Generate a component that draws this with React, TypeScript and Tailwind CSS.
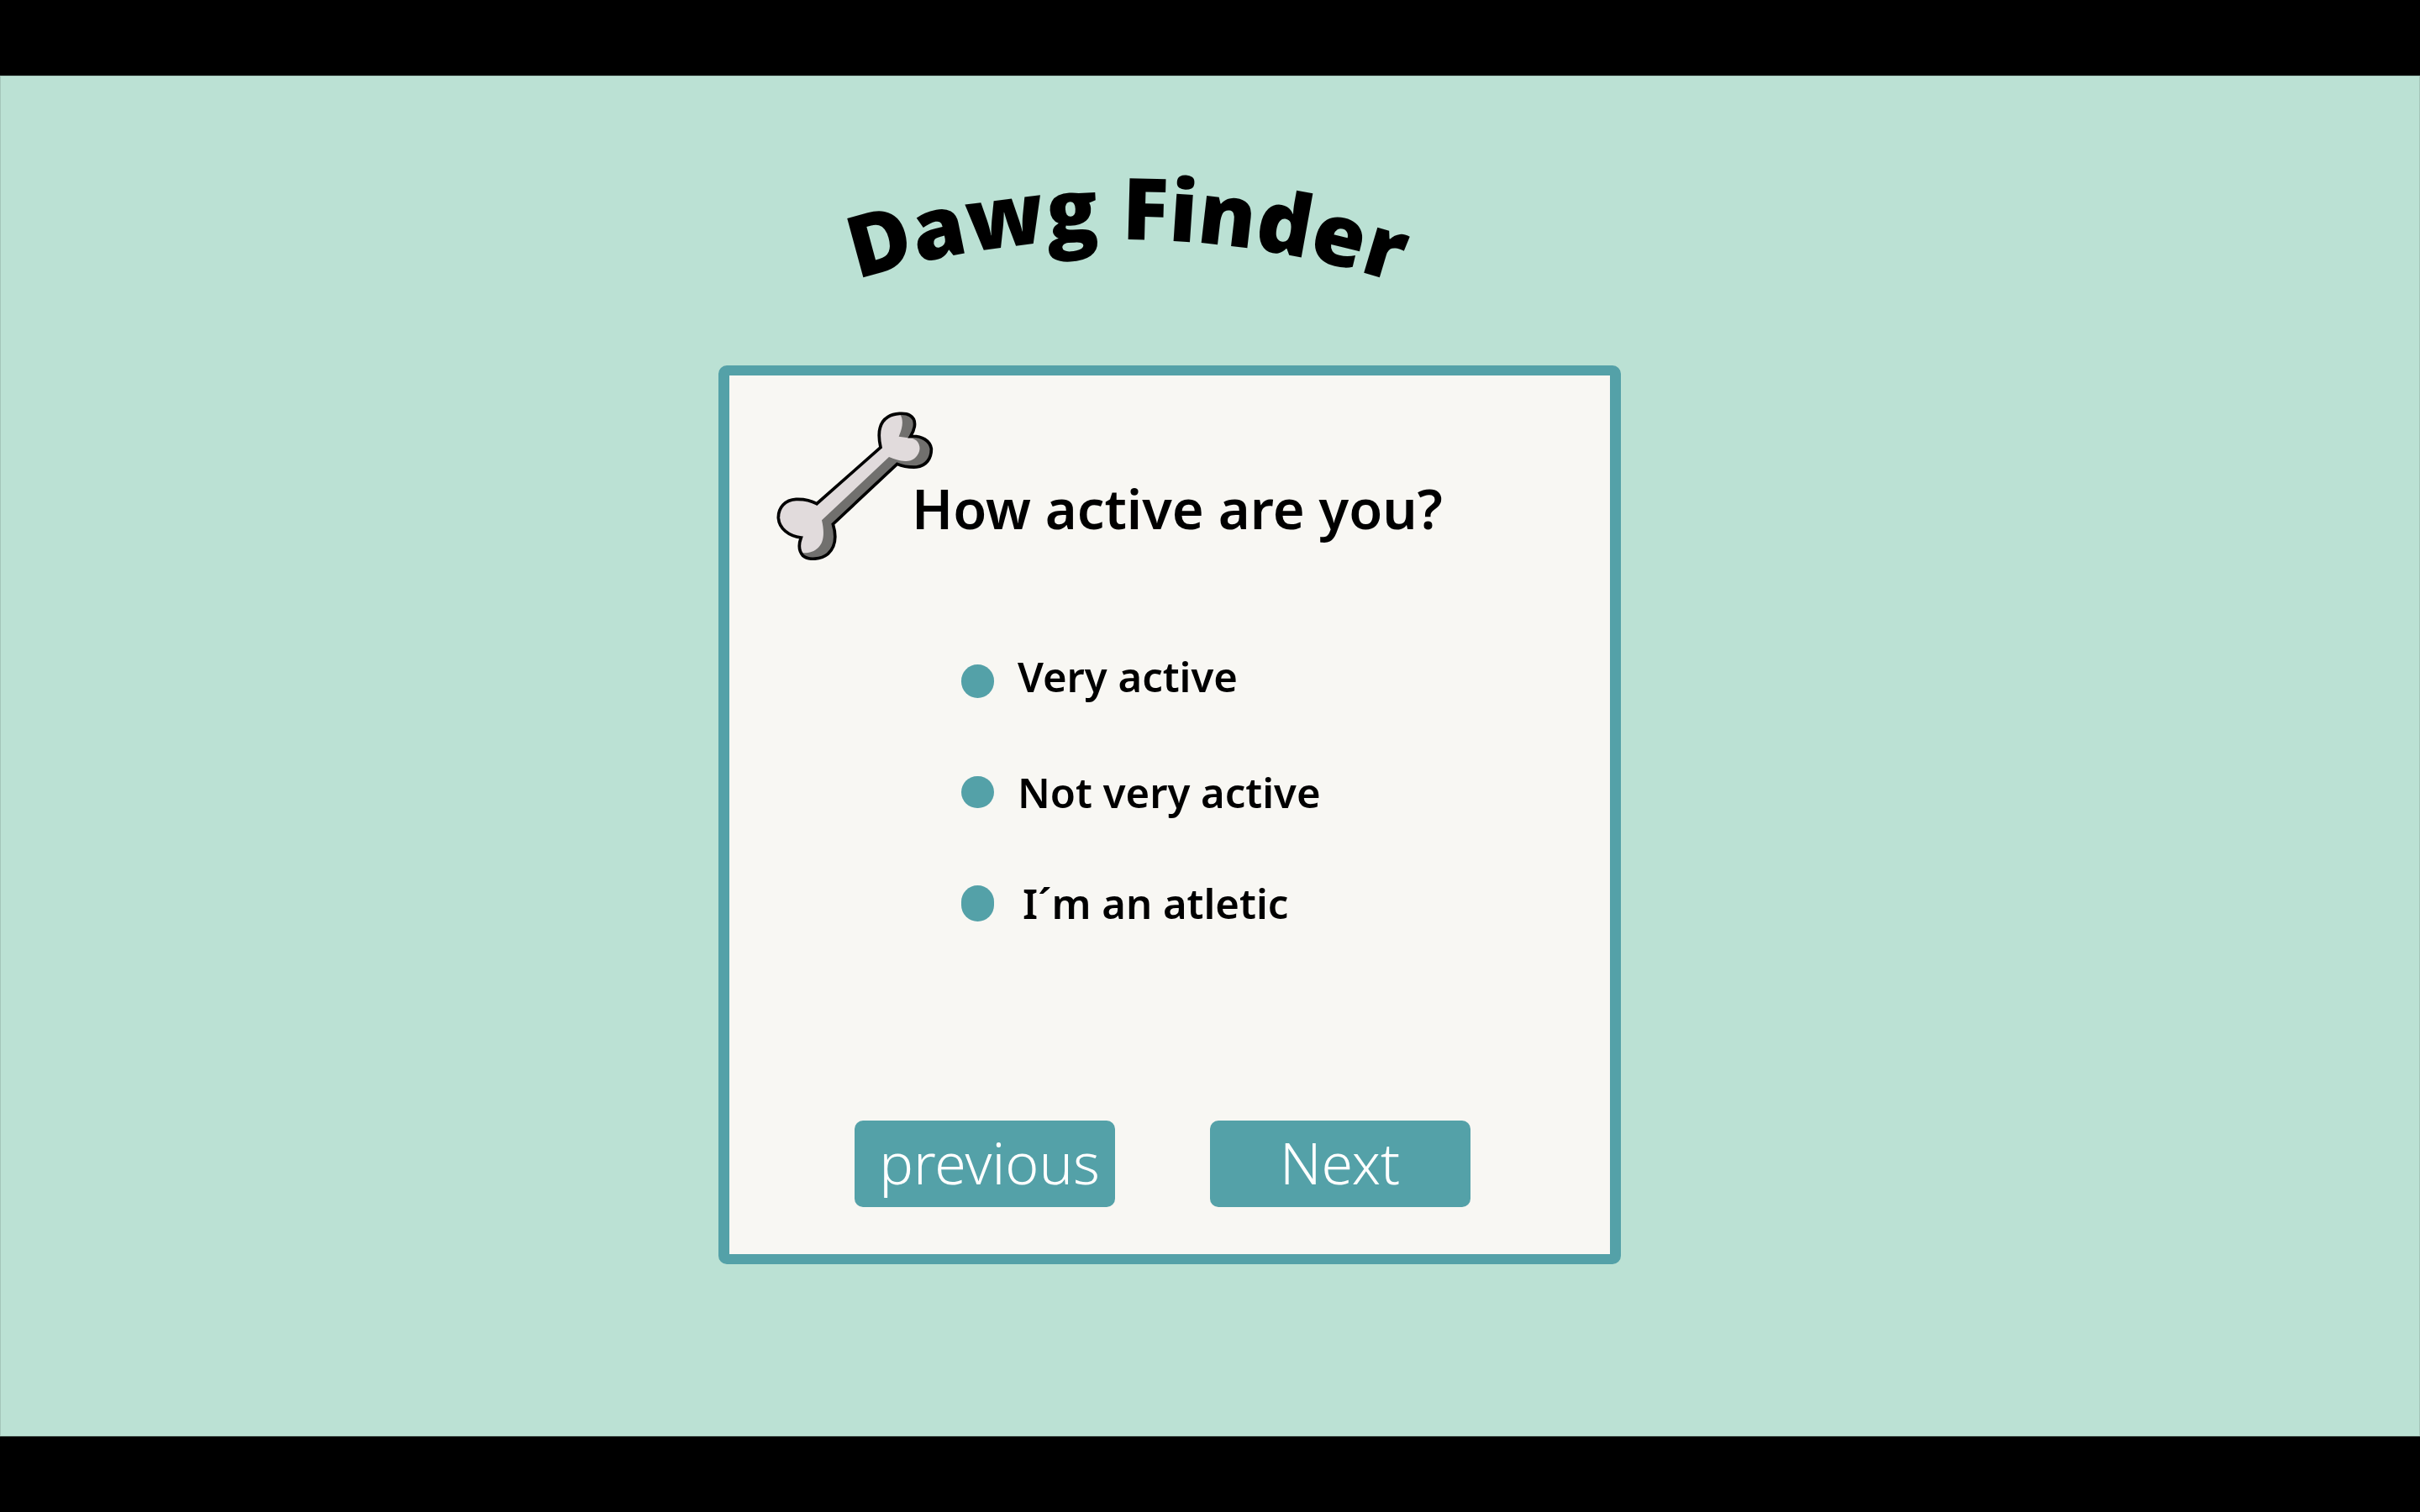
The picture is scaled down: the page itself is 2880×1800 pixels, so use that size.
const OUTLINE =
  "M624 338C612 284 622 246 650 229C672 215 712 213 728 223C754 238 748 270 731 298C772 295 800 315 805 342C806 378 786 404 752 408C728 409 704 406 683 397L454 612C467 655 463 693 436 718C412 738 366 742 347 725C332 708 331 684 340 660C296 655 262 628 259 590C258 552 284 525 322 523C352 522 377 528 396 539Z";

const LIGHT =
  "M624 338C612 284 622 246 650 229C664 220 682 217 694 220C709 246 699 274 689 299L733 305C756 308 768 330 762 352C754 376 736 388 712 387C690 386 672 380 654 372L414 598C424 640 422 676 402 695C388 710 366 716 347 715C334 704 333 680 340 660C296 655 262 628 259 590C258 552 284 525 322 523C352 522 377 528 396 539Z";

function Bone() {
  return (
    <svg viewBox="249 207 564 534" className="h-[178px] w-[188px] shrink-0" aria-hidden="true">
      <path d={OUTLINE} fill="#71706e" />
      <path d={LIGHT} fill="#e1dbdc" />
      <path d={OUTLINE} fill="none" stroke="#000" strokeWidth="11" strokeLinejoin="miter" />
    </svg>
  );
}

const options = [
  { id: "very", label: "Very active", dot: "h-10", text: "pb-3" },
  { id: "not-very", label: "Not very active", dot: "h-[38px]", text: "" },
  { id: "athletic", label: "I´m an atletic", dot: "h-[43px]", text: "pl-1.5" },
];

const buttonClass =
  "h-[103px] w-[310px] rounded-[10px] bg-[#54a1a8] pb-1 text-center text-[68px] leading-[96px] font-light text-white";

export default function App() {
  return (
    <div className="min-h-screen bg-black py-[90px] font-['Noto_Sans',sans-serif] text-black">
      <main className="flex min-h-[calc(100vh-180px)] flex-col items-center border border-[#a5c6ba] bg-[#bbe1d4] pt-[99px] pr-[96px]">
        <h1 className="mb-[85px] pr-[94px]">
          <svg viewBox="0 0 690 160" className="h-[160px] w-[690px] overflow-visible" role="img" aria-label="Dawg Finder">
            <path id="title-arc" d="M20 143A1063 1063 0 0 1 690 156" fill="none" />
            <text className="font-['Open_Sans',sans-serif] text-[102px] font-extrabold" fill="#000">
              <textPath href="#title-arc">Dawg Finder</textPath>
            </text>
          </svg>
        </h1>

        <form
          className="flex w-[1074px] max-w-full flex-col rounded-[10px] border-x-[13px] border-y-[12px] border-[#54a1a8] bg-[#f8f7f3] pt-[42px] pb-[56px]"
          onSubmit={(e) => e.preventDefault()}
        >
          <div className="flex items-end pl-[55px]">
            <Bone />
            <h2 id="question" className="mb-5 -ml-[26px] text-[65px] leading-[84px] font-semibold whitespace-nowrap">
              How active are you?
            </h2>
          </div>

          <div role="radiogroup" aria-labelledby="question" className="mt-[112px] flex flex-col gap-[68px] pl-[276px]">
            {options.map((o) => (
              <div key={o.id} className="flex h-16 items-center gap-7">
                <input
                  type="radio"
                  name="activity"
                  id={o.id}
                  className={`w-[39px] shrink-0 appearance-none rounded-full bg-[#54a1a8] ${o.dot}`}
                />
                <label htmlFor={o.id} className={`text-[49px] leading-[64px] font-semibold ${o.text}`}>
                  {o.label}
                </label>
              </div>
            ))}
          </div>

          <div className="mt-[227px] flex justify-center gap-[113px] pr-[18px]">
            <button type="button" className={`${buttonClass} pl-3`}>
              previous
            </button>
            <button type="submit" className={buttonClass}>
              Next
            </button>
          </div>
        </form>
      </main>
    </div>
  );
}
